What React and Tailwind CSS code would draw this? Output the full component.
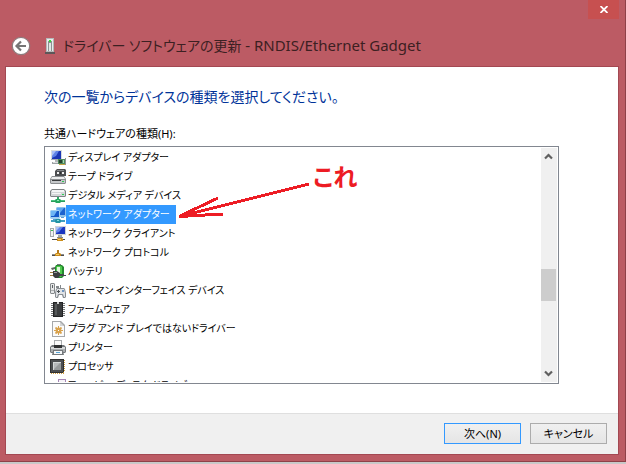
import React, { useState } from 'react';

/* 16x16 device class icons */

function DisplayIcon() {
    return (
        <>
            <path d="M1 0h11v10H1z" fill="#d9dcde" />
            <path d="M1 9h11v1H1z" fill="#a9aeb2" />
            <path d="M2 1h9v8H2z" fill="#1b36b4" />
            <path d="M2 1h7L6 6 2 8z" fill="#5f83e6" />
            <path d="M2 1h4L2 6z" fill="#a9c0f7" />
            <path d="M5 10h4v2H5z" fill="#b5b9bc" />
            <path d="M2 12h7v2H2z" fill="#9da2a5" />
            <path d="M3 12h5v1H3z" fill="#dde0e1" />
            <path d="M8 9h8v5H8z" fill="#4f8a5d" />
            <path d="M9 10h3v3H9z" fill="#24402f" />
            <path d="M13 10h1v3h-1z" fill="#a9d6b5" />
            <path d="M9 14h6v1H9z" fill="#c9a545" />
            <path d="M15 8h1v7h-1z" fill="#8e9494" />
        </>
    );
}

function TapeIcon() {
    return (
        <>
            <path d="M7 0h8l1 1v6H5V2z" fill="#4c4e50" />
            <path d="M7 1h7v1H7z" fill="#85888a" />
            <path d="M7 3h2v2H7zM12 3h2v2h-2z" fill="#f0f0f0" />
            <path d="M10 3h1v2h-1z" fill="#2b2c2d" />
            <path d="M2 7h12l2 3v4l-1 1H1l-1-1v-4z" fill="#8a8d8f" />
            <path d="M2 8h12l1 2H1z" fill="#eceded" />
            <path d="M1 11h14v3H1z" fill="#c5c8ca" />
            <path d="M2 11h9v1H2z" fill="#3a3c3e" />
            <path d="M12 12h2v1h-2z" fill="#31c653" />
        </>
    );
}

function MediaIcon() {
    return (
        <>
            <path d="M2 1h12l2 2v5l-1 1H1L0 8V3z" fill="#7f8385" />
            <path d="M2 2h12l1 2H1z" fill="#f4f5f5" />
            <path d="M1 4h14v4H1z" fill="#d3d6d7" />
            <path d="M2 5h9v1H2z" fill="#f5f5f5" />
            <path d="M12 6h2v1h-2z" fill="#2bd455" />
            <path d="M7 9h2v3H7z" fill="#31a868" />
            <path d="M1 12h14v2H1z" fill="#4cc483" />
            <path d="M1 13h14v1H1z" fill="#2b9a5b" />
            <path d="M6 11h4l1 1v2l-1 1H6l-1-1v-2z" fill="#27a860" />
            <path d="M7 12h2v1H7z" fill="#8deab3" />
        </>
    );
}

function AdapterIcon() {
    return (
        <>
            <path d="M7 0h8l1 1v8l-1 1H7L6 9V1z" fill="#8cc0ea" />
            <path d="M7 1h8v7H7z" fill="#1b62cf" />
            <path d="M7 1h7l-4 5H7z" fill="#5da4ef" />
            <path d="M1 3h8l1 1v7l-1 1H1l-1-1V4z" fill="#a2cff1" />
            <path d="M1 4h8v6H1z" fill="#1559c9" />
            <path d="M1 4h6L4 9H1z" fill="#6db4f4" />
            <path d="M11 10h3v1h-3z" fill="#5b9dd2" />
            <path d="M3 12h4v1H3z" fill="#5b9dd2" />
            <path d="M1 13h14v2H1z" fill="#3f9fc0" />
            <path d="M6 12h4l1 1v2l-1 1H6l-1-1v-2z" fill="#2494a4" />
            <path d="M7 13h2v1H7z" fill="#83dbd8" />
        </>
    );
}

function ClientIcon() {
    return (
        <>
            <path d="M0 2h4v9H0z" fill="#a6abad" />
            <path d="M1 3h2v7H1z" fill="#f1f2f2" />
            <path d="M1 4h2v1H1z" fill="#39bd53" />
            <path d="M5 0h11v9H5z" fill="#cfd3d8" />
            <path d="M6 1h9v7H6z" fill="#1b36c0" />
            <path d="M6 1h7L9 6 6 7z" fill="#5f83ea" />
            <path d="M6 1h4L6 5z" fill="#a9c0f7" />
            <path d="M8 9h4v2H8z" fill="#a4a9ac" />
            <path d="M7 11h6v1H7z" fill="#83888b" />
            <path d="M2 13h13v1H2z" fill="#4a4a4a" />
            <path d="M8 12h4l1 1v2H7v-2z" fill="#cb8e1c" />
            <path d="M8 13h3v1H8z" fill="#f6cf65" />
        </>
    );
}

function ProtocolIcon() {
    return (
        <>
            <path d="M2 9h12v1H2z" fill="#8d8d8d" />
            <path d="M2 10h12v1H2z" fill="#4d4d4d" />
            <path d="M7 5h2v3H7z" fill="#b47a1e" />
            <path d="M6 8h4l1 1v2H5V9z" fill="#c98a1b" />
            <path d="M6 9h3v1H6z" fill="#f5ce66" />
        </>
    );
}

function BatteryIcon() {
    return (
        <>
            <path d="M7 0h4v2H7z" fill="#757a7c" />
            <path d="M6 1h6l2 2v9l-2 2H7l-2-2V3z" fill="#248a2f" />
            <path d="M7 2h4l1 1v9l-1 1H8l-2-2V3z" fill="#4fcb4c" />
            <path d="M7 3h3v6H7z" fill="#e1f7dc" />
            <path d="M1 4l4-1v2L2 6z" fill="#5f6365" />
            <path d="M3 7h4l3 2v3l-2 2H5l-2-2z" fill="#3c3f41" />
            <path d="M4 8h3v1H4z" fill="#9a9fa1" />
            <path d="M0 8h3v1H0zM0 11h3v1H0z" fill="#a1803f" />
            <path d="M10 10h4v1h2v1h-6z" fill="#44484a" />
        </>
    );
}

function HidIcon() {
    return (
        <>
            <path d="M1 0h3l1 1v9l-1 1H1l-1-1V1z" fill="#85898c" />
            <path d="M1 1h3v9H1z" fill="#e5e7e8" />
            <path d="M2 2h1v3H2z" fill="#5c6062" />
            <path d="M1 7h3v1H1z" fill="#aeb1b3" />
            <path d="M6 3h3v2H6zM10 2h1v3h-1z" fill="#84898c" />
            <path d="M7 5h7l1 1 1 4v4l-1 1h-2l-1-3H9l-1 3H6l-1-1v-4l1-4z" fill="#888d92" />
            <path d="M7 6h7l1 4v4h-1l-1-3H8l-1 3H6v-4z" fill="#e0e3e6" />
            <path d="M7 8h3v1H7zM8 7h1v3H8z" fill="#4b5054" />
            <path d="M12 7h2v2h-2z" fill="#6e94bf" />
        </>
    );
}

function FirmwareIcon() {
    return (
        <>
            <path
                d="M1 1h14v1H1zM1 3h14v1H1zM1 5h14v1H1zM1 7h14v1H1zM1 9h14v1H1zM1 11h14v1H1zM1 13h14v1H1z"
                fill="#77797a"
            />
            <path d="M3 0h10v15H3z" fill="#232425" />
            <path d="M4 1h8v13H4z" fill="#3b3d3e" />
            <path d="M5 2h2v11H5z" fill="#56595a" />
            <path d="M7 0h2v2H7z" fill="#d5d5d5" />
        </>
    );
}

function PlugPlayIcon() {
    return (
        <>
            <path d="M2 0h9l4 4v12H2z" fill="#a6a8aa" />
            <path d="M3 1h7v4h4v10H3z" fill="#fbfbfb" />
            <path d="M10 1l4 4h-4z" fill="#d3d5d6" />
            <path
                d="M8 5h1v2l2-1 1 1-1 2h2v1h-2l1 2-1 1-2-1v2H8v-2l-2 1-1-1 1-2H4V9h2L5 7l1-1 2 1z"
                fill="#d9a24c"
            />
            <path d="M8 9h1v1H8z" fill="#fff" />
        </>
    );
}

function PrinterIcon() {
    return (
        <>
            <path d="M4 0h8v6H4z" fill="#a9acae" />
            <path d="M5 1h6v5H5z" fill="#fbfbfb" />
            <path d="M2 5h12l2 2v5l-1 1H1l-1-1V7z" fill="#767a7d" />
            <path d="M1 7h14v2H1z" fill="#d9dbdc" />
            <path d="M1 9h14v3H1z" fill="#a9adaf" />
            <path d="M4 5h8v3H4z" fill="#303233" />
            <path d="M3 10h10v1l1 4H2l1-4z" fill="#75797c" />
            <path d="M4 11h8v3H4z" fill="#f5f7f8" />
            <path d="M6 12h4v1H6z" fill="#58a6d8" />
        </>
    );
}

function CpuIcon() {
    return (
        <>
            <path d="M0 0h14v14H0z" fill="#303132" />
            <path d="M1 1h12v12H1z" fill="#4c4e50" />
            <path d="M3 3h8v8H3z" fill="#d5d8d8" />
            <path d="M4 4h7v7H4z" fill="#96999a" />
            <path d="M4 4h6l-6 6z" fill="#b6b9ba" />
            <path
                d="M14 1h1v1h-1zM14 3h1v1h-1zM14 5h1v1h-1zM14 7h1v1h-1zM14 9h1v1h-1zM14 11h1v1h-1z"
                fill="#cc9a3d"
            />
            <path
                d="M1 14h1v1H1zM3 14h1v1H3zM5 14h1v1H5zM7 14h1v1H7zM9 14h1v1H9zM11 14h1v1h-1zM13 13h1v2h-1z"
                fill="#cc9a3d"
            />
        </>
    );
}

function FloppyIcon() {
    return (
        <>
            <path d="M8 1h8v8H8z" fill="#a585b5" />
            <path d="M9 2h6v6H9z" fill="#f6f3f8" />
            <path d="M1 9h14v5H1z" fill="#909496" />
        </>
    );
}

const DEVICES = [
    { id: 'display', name: 'ディスプレイ アダプター', Icon: DisplayIcon },
    { id: 'tape', name: 'テープ ドライブ', Icon: TapeIcon },
    { id: 'media', name: 'デジタル メディア デバイス', Icon: MediaIcon },
    { id: 'net', name: 'ネットワーク アダプター', Icon: AdapterIcon },
    { id: 'netclient', name: 'ネットワーク クライアント', Icon: ClientIcon },
    { id: 'nettrans', name: 'ネットワーク プロトコル', Icon: ProtocolIcon },
    { id: 'battery', name: 'バッテリ', Icon: BatteryIcon },
    { id: 'hid', name: 'ヒューマン インターフェイス デバイス', Icon: HidIcon },
    { id: 'firmware', name: 'ファームウェア', Icon: FirmwareIcon },
    { id: 'legacy', name: 'プラグ アンド プレイではないドライバー', Icon: PlugPlayIcon },
    { id: 'printer', name: 'プリンター', Icon: PrinterIcon },
    { id: 'cpu', name: 'プロセッサ', Icon: CpuIcon },
    { id: 'floppy', name: 'フロッピー ディスク ドライブ', Icon: FloppyIcon },
];

function DeviceRow({ device, isSelected, onSelect }) {
    const { Icon, name } = device;

    return (
        <li
            role="option"
            aria-selected={isSelected}
            onClick={() => onSelect(device.id)}
            className="flex h-[19px] shrink-0 items-center pl-[5px]"
        >
            <svg viewBox="0 0 16 16" className="size-4 shrink-0" aria-hidden="true">
                <Icon />
            </svg>
            <span
                className={`h-[19px] pr-1.5 pl-0.5 text-[10px] leading-[19px] whitespace-nowrap ${isSelected ? 'bg-[#3399ff] text-white' : 'text-black'}`}
            >
                {name}
            </span>
        </li>
    );
}

function ScrollBar() {
    return (
        <div className="my-px mr-px flex w-4 shrink-0 flex-col bg-[#f0f0f0]">
            <button type="button" aria-label="上へスクロール" className="flex h-[17px] w-[15px] items-center justify-center">
                <svg viewBox="0 0 9 7" className="h-[7px] w-[9px]" aria-hidden="true">
                    <path d="M1 5.500l3.500-3.500L8 5.500" fill="none" stroke="#606060" strokeWidth="2.200" />
                </svg>
            </button>
            <div className="flex flex-1 flex-col">
                <div className="flex-[105]" />
                <div className="h-8 w-[15px] bg-[#cdcdcd]" />
                <div className="flex-[64]" />
            </div>
            <button type="button" aria-label="下へスクロール" className="flex h-[17px] w-[15px] items-center justify-center">
                <svg viewBox="0 0 9 7" className="h-[7px] w-[9px]" aria-hidden="true">
                    <path d="M1 1.500L4.500 5 8 1.500" fill="none" stroke="#606060" strokeWidth="2.200" />
                </svg>
            </button>
        </div>
    );
}

// Hand-drawn pointer laid over the list
function Annotation() {
    return (
        <div className="pointer-events-none absolute top-4 left-[130px] flex items-start">
            <svg viewBox="0 0 136 56" className="h-14 w-[136px]" shapeRendering="crispEdges" aria-hidden="true">
                <path d="M134 21L4 53.500M43 35L4 53.500M48 51L4 53.500" fill="none" stroke="#ed1c24" strokeWidth="3" />
            </svg>
            <span className="ml-0.5 text-2xl leading-7 font-bold text-[#ed1c24]">これ</span>
        </div>
    );
}

function TitleBar() {
    return (
        <header className="flex h-[66px] shrink-0">
            <div className="flex flex-1 items-end pb-2 pl-[11px]">
                <button type="button" aria-label="戻る" className="mb-0.5">
                    <svg viewBox="0 0 20 20" className="size-5" aria-hidden="true">
                        <circle cx="10" cy="10" r="8.700" fill="#fff" stroke="#8f7b7d" strokeWidth="1.200" />
                        <path d="M15 10H6M10 5.500L5.500 10l4.500 4.500" fill="none" stroke="#757575" strokeWidth="2.200" />
                    </svg>
                </button>
                <svg viewBox="0 0 10 16" className="mb-1 ml-3.5 h-4 w-2.5" aria-hidden="true">
                    <path d="M1 0h8v14H1z" fill="#b4b8b8" />
                    <path d="M2 1h6v12H2z" fill="#e9ecec" />
                    <path d="M3 3h4v10H3z" fill="#8c9292" />
                    <path d="M4 5h2v8H4z" fill="#e2e5e5" />
                    <path d="M4 2h2v2H4z" fill="#35d73c" />
                    <path d="M0 14h10v2H0z" fill="#5d5658" />
                </svg>
                <h1 className="ml-2 text-sm leading-6 whitespace-nowrap text-[#3c2022]">
                    ドライバー ソフトウェアの更新 <span className="text-[15px]">- RNDIS/Ethernet Gadget</span>
                </h1>
            </div>
            <button
                type="button"
                aria-label="閉じる"
                className="mr-1.5 flex h-[19px] w-[31px] items-center justify-center bg-[#c75050]"
            >
                <svg viewBox="0 0 8 7" className="h-[7px] w-2" aria-hidden="true">
                    <path d="M.5 0l7 7M7.500 0l-7 7" stroke="#fff" strokeWidth="1.800" />
                </svg>
            </button>
        </header>
    );
}

export default function App() {
    const [selected, setSelected] = useState('net');

    return (
        <div className="flex h-screen min-h-[300px] flex-col bg-[#c8c8c8] pb-0.5 font-['Noto_Sans','Noto_Sans_CJK_JP',sans-serif] text-[11px] [font-feature-settings:'palt']">
            <div className="flex min-h-0 flex-1 flex-col border-r border-b border-[#8f4048] bg-[#bc5b64] pb-1.5">
                <TitleBar />
                <div className="mr-1.5 ml-[5px] flex min-h-0 flex-1 flex-col border border-[#a34852] bg-white">
                    <main className="flex min-h-0 flex-1 flex-col pt-[18px] pr-[59px] pb-[29px] pl-[38px]">
                        <h2 className="text-sm leading-6 whitespace-nowrap text-[#003399]">
                            次の一覧からデバイスの種類を選択してください。
                        </h2>
                        <p id="device-label" className="mt-4 mb-[3px] leading-[18px] text-black">
                            共通ハードウェアの種類(H):
                        </p>
                        <div className="relative flex min-h-0 flex-1 border border-[#828790]">
                            <ul
                                role="listbox"
                                aria-labelledby="device-label"
                                tabIndex={0}
                                className="my-px flex min-w-0 flex-1 flex-col overflow-hidden outline-none"
                            >
                                {DEVICES.map((device) => (
                                    <DeviceRow
                                        key={device.id}
                                        device={device}
                                        isSelected={device.id === selected}
                                        onSelect={setSelected}
                                    />
                                ))}
                            </ul>
                            <ScrollBar />
                            <Annotation />
                        </div>
                    </main>
                    <footer className="flex shrink-0 justify-end gap-[9px] border-t border-[#dfdfdf] bg-[#f0f0f0] pt-[9px] pr-[11px] pb-2.5">
                        <button
                            type="button"
                            className="h-[21px] w-[77px] border border-[#3399ff] bg-linear-to-b from-[#f0f0f0] to-[#e5e5e5] leading-[18px] text-black"
                        >
                            次へ(N)
                        </button>
                        <button
                            type="button"
                            className="h-[21px] w-[77px] border border-[#acacac] bg-linear-to-b from-[#f0f0f0] to-[#e5e5e5] leading-[18px] text-black"
                        >
                            キャンセル
                        </button>
                    </footer>
                </div>
            </div>
        </div>
    );
}
